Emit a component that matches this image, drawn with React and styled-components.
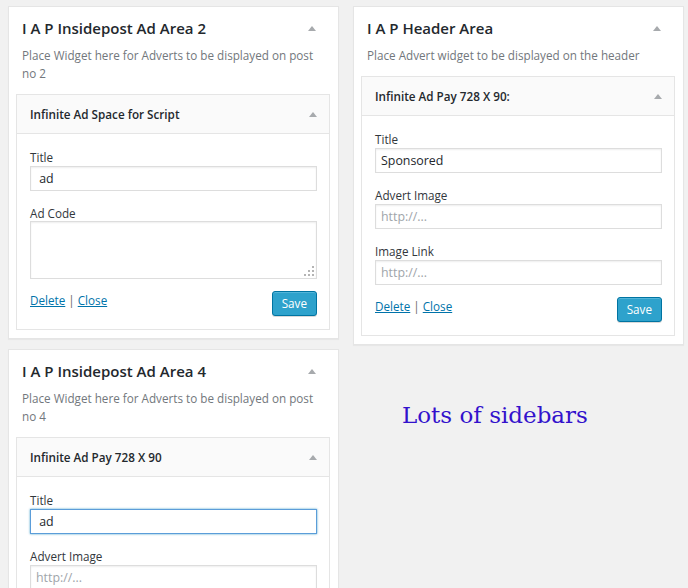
import React from "react";
import styled, { createGlobalStyle } from "styled-components";

const GlobalStyle = createGlobalStyle`
  html, body {
    margin: 0;
    padding: 0;
    background: #f1f1f1;
  }
  body {
    font-family: "Open Sans", "Noto Sans", sans-serif;
    font-size: 13px;
    color: #444;
  }
`;

const sidebars = {
  left: [
    {
      name: "I A P Insidepost Ad Area 2",
      description: "Place Widget here for Adverts to be displayed on post no 2",
      widget: {
        title: "Infinite Ad Space for Script",
        fields: [
          { label: "Title", value: " ad" },
          { label: "Ad Code", textarea: true },
        ],
      },
    },
    {
      name: "I A P Insidepost Ad Area 4",
      description: "Place Widget here for Adverts to be displayed on post no 4",
      widget: {
        title: "Infinite Ad Pay 728 X 90",
        fields: [
          { label: "Title", value: " ad", focused: true },
          { label: "Advert Image", placeholder: "http://..." },
          { label: "Image Link", placeholder: "http://..." },
        ],
      },
    },
  ],
  right: [
    {
      name: "I A P Header Area",
      description: "Place Advert widget to be displayed on the header",
      widget: {
        title: "Infinite Ad Pay 728 X 90:",
        fields: [
          { label: "Title", value: "Sponsored" },
          { label: "Advert Image", placeholder: "http://..." },
          { label: "Image Link", placeholder: "http://..." },
        ],
      },
    },
  ],
};

function Arrow() {
  return (
    <svg width="8" height="5" viewBox="0 0 8 5">
      <path d="M4 0 L8 5 L0 5 Z" fill="#a7aaad" />
    </svg>
  );
}

// the little dotted resize grip in the textarea corner
function Grip() {
  const dots = [
    [8, 0],
    [4, 4],
    [8, 4],
    [0, 8],
    [4, 8],
    [8, 8],
  ];
  return (
    <GripIcon width="10" height="10" viewBox="0 0 10 10">
      {dots.map(([x, y]) => (
        <rect key={`${x}-${y}`} x={x} y={y} width="2" height="2" fill="#b4b4b4" />
      ))}
    </GripIcon>
  );
}

function Widget({ widget }) {
  return (
    <WidgetBox>
      <WidgetHead>
        <WidgetTitle>{widget.title}</WidgetTitle>
        <Toggle>
          <Arrow />
        </Toggle>
      </WidgetHead>
      <WidgetBody>
        {widget.fields.map((f) => (
          <Field key={f.label}>
            <Label>{f.label}</Label>
            {f.textarea ? (
              <AreaWrap>
                <TextArea readOnly />
                <Grip />
              </AreaWrap>
            ) : (
              <Input
                readOnly
                $focused={f.focused}
                defaultValue={f.value}
                placeholder={f.placeholder}
              />
            )}
          </Field>
        ))}
        <Actions>
          <Links>
            <LinkText href="#">Delete</LinkText>
            <Sep>|</Sep>
            <LinkText href="#">Close</LinkText>
          </Links>
          <SaveButton>Save</SaveButton>
        </Actions>
      </WidgetBody>
    </WidgetBox>
  );
}

function Sidebar({ data }) {
  return (
    <SidebarBox>
      <SidebarHead>
        <SidebarName>{data.name}</SidebarName>
        <Toggle>
          <Arrow />
        </Toggle>
      </SidebarHead>
      <Description>{data.description}</Description>
      <Widget widget={data.widget} />
    </SidebarBox>
  );
}

export default function App() {
  return (
    <>
      <GlobalStyle />
      <Page>
        <Column>
          {sidebars.left.map((s) => (
            <Sidebar key={s.name} data={s} />
          ))}
        </Column>
        <Column>
          {sidebars.right.map((s) => (
            <Sidebar key={s.name} data={s} />
          ))}
          <Note>Lots of sidebars</Note>
        </Column>
      </Page>
    </>
  );
}

const Page = styled.div`
  display: grid;
  grid-template-columns: 331px 331px;
  column-gap: 14px;
  padding: 6px 4px 0 8px;
  height: 582px;
  overflow: hidden;
`;

const Column = styled.div`
  display: flex;
  flex-direction: column;
  gap: 10px;
  align-items: stretch;
`;

const SidebarBox = styled.section`
  background: #fff;
  border: 1px solid #e5e5e5;
  box-shadow: 0 1px 1px rgba(0, 0, 0, 0.04);
  padding: 0 8px 8px 7px;
`;

const SidebarHead = styled.div`
  display: flex;
  align-items: center;
  justify-content: space-between;
  padding: 11px 14px 0 6px;
`;

const SidebarName = styled.h2`
  margin: 0;
  font-size: 15px;
  font-weight: 600;
  line-height: 20px;
  color: #23282d;
`;

const Toggle = styled.span`
  display: flex;
  align-items: center;
  height: 20px;
`;

const Description = styled.p`
  margin: 8px 0 0;
  padding: 0 6px;
  font-size: 11.7px;
  line-height: 18px;
  color: #72777c;
`;

const WidgetBox = styled.div`
  margin-top: 12px;
  border: 1px solid #e5e5e5;
  background: #fff;
`;

const WidgetHead = styled.div`
  display: flex;
  align-items: center;
  justify-content: space-between;
  height: 38px;
  padding: 0 12px 0 13px;
  background: #fafafa;
  border-bottom: 1px solid #e5e5e5;
`;

const WidgetTitle = styled.h3`
  margin: 0;
  font-size: 11.7px;
  font-weight: 600;
  color: #23282d;
`;

const WidgetBody = styled.div`
  padding: 14px 12px 13px 13px;
`;

const Field = styled.div`
  display: flex;
  flex-direction: column;
  & + & {
    margin-top: 13px;
  }
`;

const Label = styled.label`
  font-size: 11.7px;
  line-height: 18px;
  color: #32373c;
`;

const Input = styled.input`
  box-sizing: border-box;
  height: 25px;
  width: 100%;
  margin: 0;
  padding: 0 5px;
  font-family: "Open Sans", "Noto Sans", sans-serif;
  font-size: 12.4px;
  color: #23282d;
  background: #fff;
  border: 1px solid ${(p) => (p.$focused ? "#5b9dd9" : "#ddd")};
  box-shadow: ${(p) =>
    p.$focused
      ? "0 0 2px rgba(30, 140, 190, 0.8)"
      : "inset 0 1px 2px rgba(0, 0, 0, 0.07)"};
  outline: none;
  &::placeholder {
    color: #a0a5aa;
  }
`;

const AreaWrap = styled.div`
  position: relative;
  margin-top: -1px;
`;

const TextArea = styled.textarea`
  box-sizing: border-box;
  height: 58px;
  width: 100%;
  margin: 0;
  display: block;
  border: 1px solid #ddd;
  box-shadow: inset 0 1px 2px rgba(0, 0, 0, 0.07);
  outline: none;
  resize: none;
`;

const GripIcon = styled.svg`
  position: absolute;
  right: 3px;
  bottom: 3px;
`;

const Actions = styled.div`
  display: flex;
  justify-content: space-between;
  align-items: flex-start;
  margin-top: 12px;
`;

const Links = styled.div`
  display: flex;
  gap: 3px;
  font-size: 11.7px;
  line-height: 18px;
`;

const LinkText = styled.a`
  color: #0073aa;
  text-decoration: underline;
`;

const Sep = styled.span`
  color: #666;
`;

const SaveButton = styled.button`
  height: 25px;
  padding: 0 9px 1px;
  font-family: "Open Sans", "Noto Sans", sans-serif;
  font-size: 11.7px;
  line-height: 22px;
  color: #fff;
  background: #2ea2cc;
  border: 1px solid #0074a2;
  border-radius: 3px;
  box-shadow: inset 0 1px 0 rgba(120, 200, 230, 0.5),
    0 1px 0 rgba(0, 0, 0, 0.15);
`;

const Note = styled.div`
  padding: 47px 0 0 49px;
  font-family: "DejaVu Serif", serif;
  font-size: 23px;
  color: #3311cc;
`;
